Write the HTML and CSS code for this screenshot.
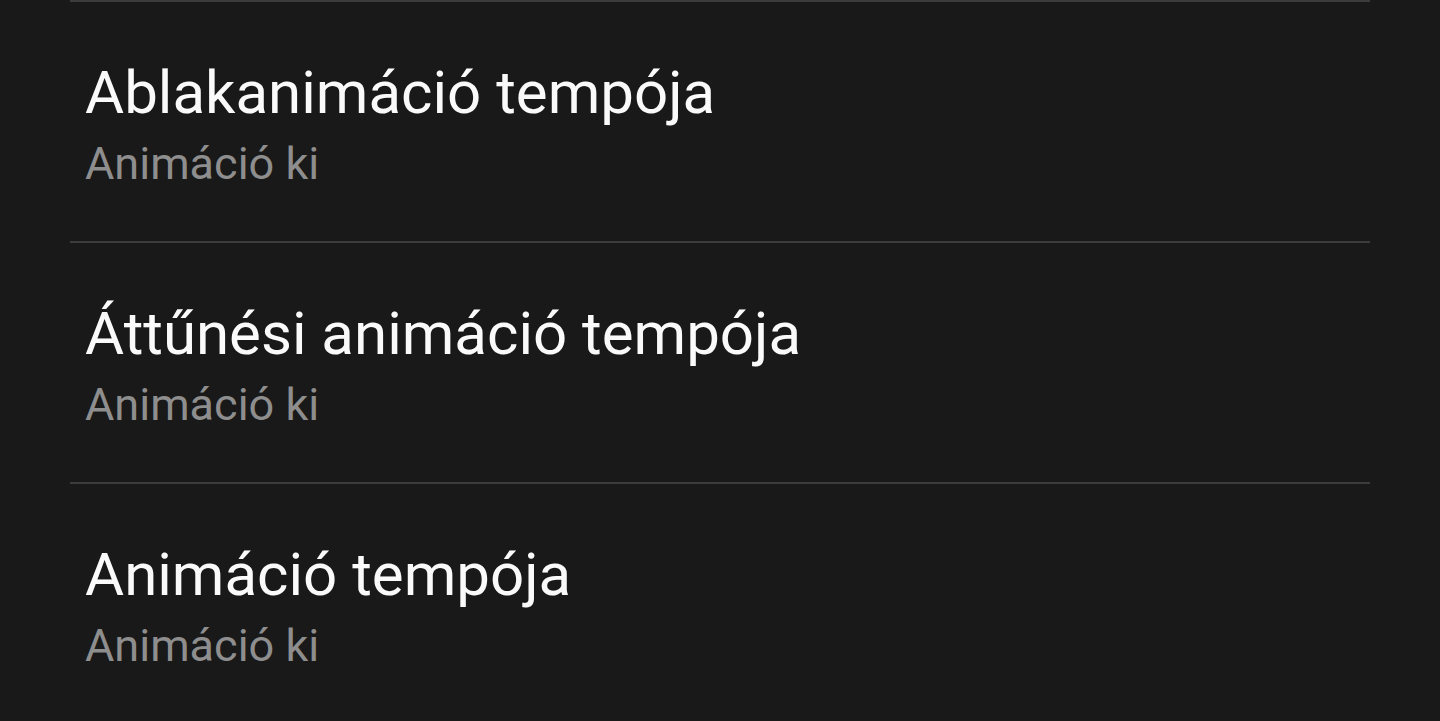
FILE: index.html
```html
<!DOCTYPE html>
<html lang="hu">
<head>
<meta charset="utf-8">
<link rel="stylesheet" href="styles.css">
</head>
<body>
<div class="list">
  <div class="row">
    <div class="title">Ablakanimáció tempója</div>
    <div class="sub">Animáció ki</div>
  </div>
  <div class="row">
    <div class="title">Áttűnési animáció tempója</div>
    <div class="sub">Animáció ki</div>
  </div>
  <div class="row">
    <div class="title">Animáció tempója</div>
    <div class="sub">Animáció ki</div>
  </div>
</div>
</body>
</html>
```
FILE: styles.css
```css
html, body {
  margin: 0;
  padding: 0;
  background: #191919;
  height: 100%;
  overflow: hidden;
}
body {
  font-family: Roboto, "Noto Sans", sans-serif;
}
.list {
  padding: 0 70px;
}
.row {
  border-top: 2px solid #3c3c3c;
  padding-left: 15px;
  padding-top: 56px;
  box-sizing: border-box;
  height: 241px;
}
.title {
  color: #fafafa;
  font-size: 60px;
  line-height: 70px;
}
.sub {
  color: #8e8e8e;
  font-size: 45px;
  line-height: 72px;
}
```
